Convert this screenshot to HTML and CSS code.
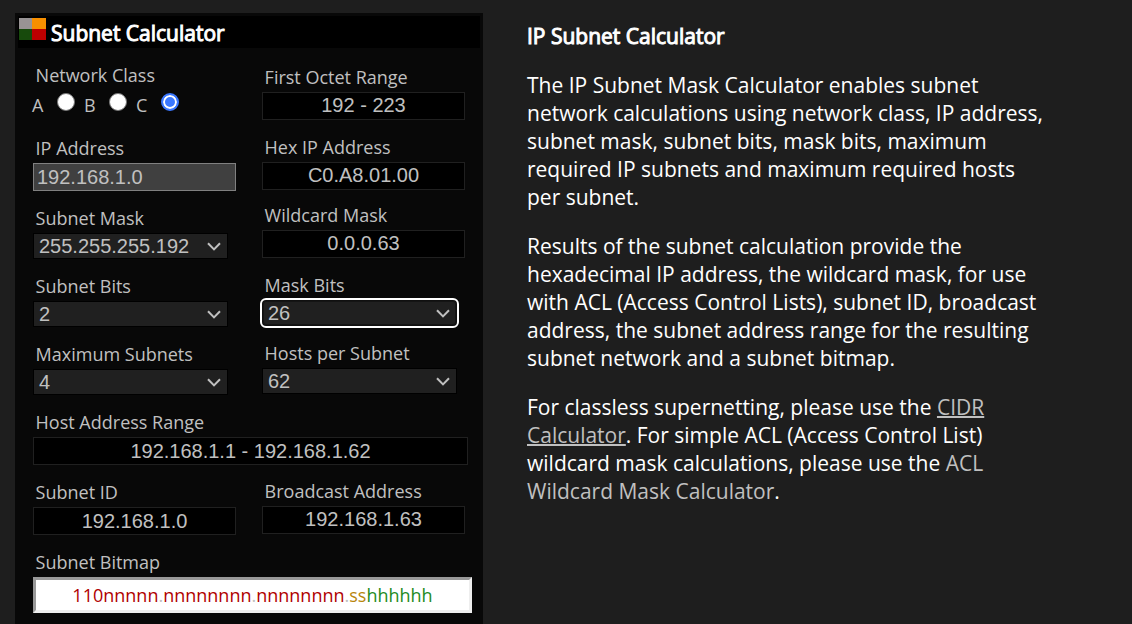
FILE: index.html
```html
<!DOCTYPE html>
<html lang="en">
<head>
<meta charset="utf-8">
<title>IP Subnet Calculator</title>
<link rel="stylesheet" href="styles.css">
</head>
<body>
<main class="page">
<form class="panel">
  <header class="panel-head">
    <span class="logo"><i class="q grey"></i><i class="q orange"></i><i class="q green"></i><i class="q red"></i></span>
    <h2 class="panel-title">Subnet Calculator</h2>
  </header>
  <div class="columns">
    <div class="col">
      <div class="field classes"><span class="label">Network Class</span>
        <div class="radios">
          <label class="opt">A<span class="radio"></span></label>
          <label class="opt">B<span class="radio"></span></label>
          <label class="opt">C<span class="radio on"></span></label>
        </div>
      </div>
      <div class="field"><span class="label">IP Address</span><div class="input low edit">192.168.1.0</div></div>
      <div class="field"><span class="label">Subnet Mask</span><div class="select">255.255.255.192<svg class="chev" viewBox="0 0 14 9"><path d="M1 1.200 7 7.400l6-6.200"/></svg></div></div>
      <div class="field"><span class="label">Subnet Bits</span><div class="select">2<svg class="chev" viewBox="0 0 14 9"><path d="M1 1.200 7 7.400l6-6.200"/></svg></div></div>
      <div class="field"><span class="label">Maximum Subnets</span><div class="select">4<svg class="chev" viewBox="0 0 14 9"><path d="M1 1.200 7 7.400l6-6.200"/></svg></div></div>
    </div>
    <div class="col right">
      <div class="field"><span class="label">First Octet Range</span><div class="input">192 - 223</div></div>
      <div class="field tight"><span class="label">Hex IP Address</span><div class="input">C0.A8.01.00</div></div>
      <div class="field"><span class="label">Wildcard Mask</span><div class="input">0.0.0.63</div></div>
      <div class="field"><span class="label">Mask Bits</span><div class="select focus">26<svg class="chev" viewBox="0 0 14 9"><path d="M1 1.200 7 7.400l6-6.200"/></svg></div></div>
      <div class="field"><span class="label">Hosts per Subnet</span><div class="select">62<svg class="chev" viewBox="0 0 14 9"><path d="M1 1.200 7 7.400l6-6.200"/></svg></div></div>
    </div>
  </div>
  <div class="field wide"><span class="label">Host Address Range</span><div class="input low full">192.168.1.1 - 192.168.1.62</div></div>
  <div class="columns ids">
    <div class="col"><div class="field"><span class="label">Subnet ID</span><div class="input low">192.168.1.0</div></div></div>
    <div class="col last"><div class="field"><span class="label">Broadcast Address</span><div class="input">192.168.1.63</div></div></div>
  </div>
  <div class="field wide"><span class="label">Subnet Bitmap</span>
    <div class="bitmap"><span class="net">110nnnnn</span><span class="dot">.</span><span class="net">nnnnnnnn</span><span class="dot">.</span><span class="net">nnnnnnnn</span><span class="dot">.</span><span class="sub">ss</span><span class="host">hhhhhh</span></div>
  </div>
</form>
<article class="about">
  <h1 class="title">IP Subnet Calculator</h1>
  <p class="para">The IP Subnet Mask Calculator enables subnet<br>network calculations using network class, IP address,<br>subnet mask, subnet bits, mask bits, maximum<br>required IP subnets and maximum required hosts<br>per subnet.</p>
  <p class="para">Results of the subnet calculation provide the<br>hexadecimal IP address, the wildcard mask, for use<br>with ACL (Access Control Lists), subnet ID, broadcast<br>address, the subnet address range for the resulting<br>subnet network and a subnet bitmap.</p>
  <p class="para">For classless supernetting, please use the <a class="link under">CIDR<br>Calculator</a>. For simple ACL (Access Control List)<br>wildcard mask calculations, please use the <a class="link">ACL<br>Wildcard Mask Calculator</a>.</p>
</article>
</main>
</body>
</html>
```
FILE: styles.css
```css
* { box-sizing: border-box; }
body { margin: 0; height: 624px; overflow: hidden; background: #1e1e1e; color: #fff; font-family: "Open Sans", sans-serif; }
.page { display: flex; align-items: flex-start; padding: 13px 0 0 15px; }
.panel { width: 468px; height: 611px; flex: none; background: #080808; color: #c0c0c0; }
.panel-head { display: flex; margin: 3px 3px 0; height: 32px; padding: 2px 0 0 1px; background: #000; }
.logo { display: grid; grid-template-columns: 13px 14px; grid-template-rows: 11px 11px; height: 22px; }
.grey { background: #989394; }
.orange { background: #f78f00; }
.green { background: #174a0c; }
.red { background: #bd0000; }
.panel-title { margin: 0 0 0 5px; font-size: 21px; line-height: 30px; font-weight: 400; color: #fff; -webkit-text-stroke: 1px #fff; }
.columns { display: flex; padding-left: 18px; }
.col { flex: none; width: 229px; padding-top: 15px; }
.right { padding-top: 17px; }
.field { display: flex; flex-direction: column; margin-bottom: 15px; }
.tight { margin-bottom: 13px; }
.label { height: 24px; margin: 0 0 3px 2.600px; font-size: 18px; line-height: 24px; white-space: nowrap; }
.input { width: 203px; height: 28px; border: 1px solid #202020; background: #000; font: 20px/25px "Liberation Sans", Arial, sans-serif; text-align: center; }
.low { line-height: 27px; }
.edit { border-color: #808080; background: #404040; text-align: left; padding-left: 3px; }
.full { width: 435px; }
.select { display: flex; align-items: center; justify-content: space-between; width: 195px; height: 26px; padding: 0 6px 0 5px; border: 1px solid #000; background: #202020; font: 20px/24px "Liberation Sans", Arial, sans-serif; }
.focus { outline: 2px solid #fff; border-color: #101010; border-radius: 4px; box-shadow: inset 0 0 0 1px #141414; }
.chev { width: 14px; height: 9px; fill: none; stroke: #c0c0c0; stroke-width: 2; }
.classes { margin-bottom: 22px; height: 51px; }
.radios { display: flex; margin-left: -1px; font-size: 18px; line-height: 30px; }
.opt { display: flex; width: 52px; }
.radio { width: 18px; height: 18px; margin: 3px 9px 0 auto; border: 1px solid #767676; border-radius: 50%; background: #fff; }
.on { border: 2px solid #3b78ff; box-shadow: inset 0 0 0 2px #fff; background: #3b78ff; }
.wide { padding-left: 18px; }
.ids .col { padding-top: 0; }
.ids .last { margin-top: -1px; }
.bitmap { width: 439px; height: 36px; border: 3px solid; border-color: #999 #eee #eee #999; background: #fff; text-align: center; font-size: 18px; line-height: 31px; }
.net { color: #b00000; }
.dot { color: #c0c0c0; }
.sub { color: #b8860b; }
.host { color: #228b22; }
.about { margin: 9px 0 0 44px; white-space: nowrap; }
.title { margin: 0 0 21px; font-size: 21px; line-height: 28px; font-weight: 400; -webkit-text-stroke: 1px #fff; }
.para { margin: 0 0 21px; font-size: 21px; line-height: 28px; }
.link { color: #c0c0c0; }
.under { text-decoration: underline; text-decoration-thickness: 2px; }
```
